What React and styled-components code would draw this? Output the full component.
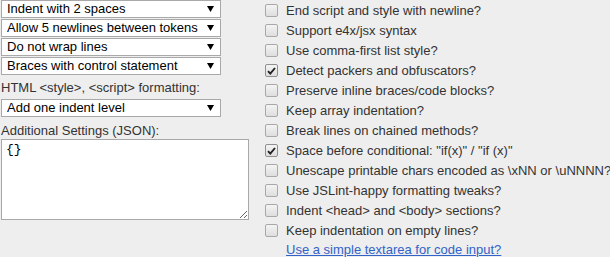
import React from "react";
import styled, { createGlobalStyle } from "styled-components";

const Global = createGlobalStyle`
  html, body { margin: 0; padding: 0; background: #eeeeee; }
  body { font-family: "Liberation Sans", Arial, sans-serif; font-size: 13px; color: #333; }
`;

const Page = styled.div`
  display: flex;
  align-items: flex-start;
  gap: 16px;
  padding-left: 1px;
  width: 610px;
  height: 257px;
  box-sizing: border-box;
  overflow: hidden;
`;

const LeftCol = styled.div`
  width: 248px;
  display: flex;
  flex-direction: column;
`;

const SelectWrap = styled.div`
  position: relative;
  width: 220px;
  height: 18px;
  margin-bottom: ${(p) => p.$mb ?? 1}px;
`;

const Select = styled.select`
  appearance: none;
  -webkit-appearance: none;
  width: 220px;
  height: 18px;
  box-sizing: border-box;
  margin: 0;
  border: 1px solid #a9a9a9;
  border-radius: 0;
  background: #fff;
  color: #000;
  font-family: "Liberation Sans", Arial, sans-serif;
  font-size: 13px;
  line-height: 16px;
  padding: 0 0 0 5px;
  outline: none;
`;

const Arrow = styled.svg`
  position: absolute;
  right: 7px;
  top: 6px;
  pointer-events: none;
`;

const Label = styled.div`
  font-size: 13px;
  line-height: 16px;
  color: #333;
  padding-top: ${(p) => p.$pt}px;
  height: ${(p) => p.$h}px;
  box-sizing: border-box;
`;

const TextArea = styled.textarea`
  display: block;
  width: 248px;
  height: 81px;
  box-sizing: border-box;
  margin: 0;
  border: 1px solid #a9a9a9;
  background: #fff;
  font-family: "Liberation Mono", "DejaVu Sans Mono", monospace;
  font-size: 13px;
  line-height: 15px;
  color: #000;
  padding: 2px 4px;
  outline: none;
`;

const RightCol = styled.div`
  display: flex;
  flex-direction: column;
  padding-top: 1px;
`;

const Row = styled.label`
  display: flex;
  align-items: center;
  height: 20px;
  gap: 8px;
  font-size: 13px;
  line-height: 20px;
  color: #333;
  white-space: nowrap;
`;

const Box = styled.span`
  width: 13px;
  height: 13px;
  box-sizing: border-box;
  border: 1px solid ${(p) => (p.$checked ? "#8f8f8f" : "#a8a8a8")};
  border-radius: 2px;
  background: linear-gradient(#f4f4f4, #dedede);
  display: flex;
  align-items: center;
  justify-content: center;
  flex-shrink: 0;
  margin-top: -1px;
`;

const LinkRow = styled.div`
  padding-left: 21px;
  height: 20px;
  line-height: 18px;
`;

const Link = styled.a`
  color: #3163c8;
  text-decoration: underline;
  font-size: 13px;
`;

const selects = [
  "Indent with 2 spaces",
  "Allow 5 newlines between tokens",
  "Do not wrap lines",
  "Braces with control statement",
];

const options = [
  ["End script and style with newline?", false],
  ["Support e4x/jsx syntax", false],
  ["Use comma-first list style?", false],
  ["Detect packers and obfuscators?", true],
  ["Preserve inline braces/code blocks?", false],
  ["Keep array indentation?", false],
  ["Break lines on chained methods?", false],
  ['Space before conditional: "if(x)" / "if (x)"', true],
  ["Unescape printable chars encoded as \\xNN or \\uNNNN?", false],
  ["Use JSLint-happy formatting tweaks?", false],
  ["Indent <head> and <body> sections?", false],
  ["Keep indentation on empty lines?", false],
];

function Dropdown({ value, mb }) {
  return (
    <SelectWrap $mb={mb}>
      <Select defaultValue={value}>
        <option>{value}</option>
      </Select>
      <Arrow width="7" height="6" viewBox="0 0 7 6">
        <path d="M0 0 H7 L3.5 6 Z" fill="#000" />
      </Arrow>
    </SelectWrap>
  );
}

function Check({ checked }) {
  return (
    <Box $checked={checked}>
      {checked && (
        <svg width="9" height="8" viewBox="0 0 9 8">
          <path d="M1 4.2 L3.3 6.6 L8 1" stroke="#222" strokeWidth="1.9" fill="none" />
        </svg>
      )}
    </Box>
  );
}

export default function App() {
  return (
    <>
      <Global />
      <Page>
        <LeftCol>
          {selects.map((s) => (
            <Dropdown key={s} value={s} />
          ))}
          <Label $pt={4} $h={23}>HTML &lt;style&gt;, &lt;script&gt; formatting:</Label>
          <Dropdown value="Add one indent level" mb={0} />
          <Label $pt={6} $h={22}>Additional Settings (JSON):</Label>
          <TextArea defaultValue="{}" />
        </LeftCol>
        <RightCol>
          {options.map(([text, checked]) => (
            <Row key={text}>
              <Check checked={checked} />
              <span>{text}</span>
            </Row>
          ))}
          <LinkRow>
            <Link href="#">Use a simple textarea for code input?</Link>
          </LinkRow>
        </RightCol>
      </Page>
    </>
  );
}
